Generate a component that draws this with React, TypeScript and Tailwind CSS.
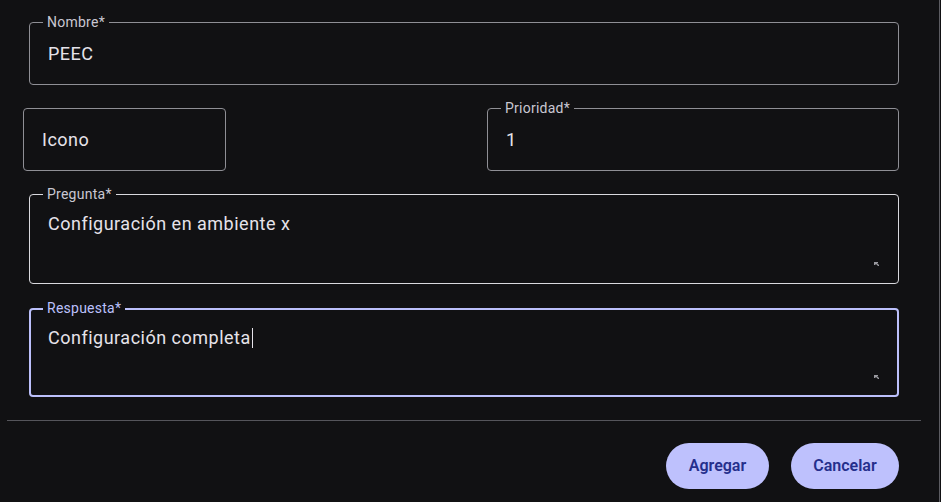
import React from 'react';

const font = { fontFamily: 'Roboto, "Noto Sans", sans-serif' };

// Campo con borde y etiqueta flotante sobre el borde
const Campo: React.FC<{
    label?: string;
    value: string;
    alto: string;
    activo?: boolean;
    multilinea?: boolean;
    cursor?: boolean;
    className?: string;
}> = ({ label, value, alto, activo, multilinea, cursor, className }) => {
    const borde = activo
        ? 'border-2 border-[#bcc0fb] px-[17px] pt-[16px]'
        : multilinea
        ? 'border border-[#d9d9de] px-[18px] pt-[17px]'
        : 'border border-[#8f8f95] px-[18px] items-center';

    return (
        <div className={`relative flex rounded-[4px] ${borde} ${alto} ${className ?? ''}`}>
            {label && (
                <span
                    className={`absolute ${activo ? 'left-[12px] -top-[10px]' : 'left-[13px] -top-[9px]'} px-[4px] bg-[#111113] text-[14px] leading-[16px] tracking-[0.25px] ${
                        activo ? 'text-[#bcc0fb]' : 'text-[#c9c7d2]'
                    }`}
                >
                    {label}
                </span>
            )}
            <span className="text-[18px] leading-[24px] text-[#e6e3ea] tracking-[0.5px] h-[24px]">
                {value}
                {cursor && <span className="inline-block w-px h-[20px] bg-[#e6e3ea] align-[-4px] ml-px" />}
            </span>
            {multilinea && (
                <svg
                    className={`absolute ${activo ? 'right-[17px] bottom-[14px]' : 'right-[18px] bottom-[15px]'}`}
                    width="6"
                    height="6"
                    viewBox="0 0 6 6"
                >
                    <path d="M0 0 L4 0 L4 1 L3 1 L5 3 L5 4 L4 4 L2 2 L1 3 L0 3 Z" fill="#9a9aa0" />
                </svg>
            )}
        </div>
    );
};

const App: React.FC = () => {
    return (
        <div className="w-[941px] h-[502px] bg-[#111113] flex overflow-hidden" style={font}>
            <div className="w-[939px] flex flex-col">
                <div className="flex flex-col pl-[29px] pr-[40px] pt-[22px]">
                    <Campo label="Nombre*" value="PEEC" alto="h-[63px]" />
                    <div className="flex justify-between mt-[23px]">
                        <Campo value="Icono" alto="h-[63px]" className="w-[203px] -ml-[6px]" />
                        <Campo label="Prioridad*" value="1" alto="h-[63px]" className="w-[412px]" />
                    </div>
                    <Campo
                        label="Pregunta*"
                        value="Configuración en ambiente x"
                        alto="h-[90px]"
                        multilinea
                        className="mt-[23px]"
                    />
                    <Campo
                        label="Respuesta*"
                        value="Configuración completa"
                        alto="h-[89px]"
                        multilinea
                        activo
                        cursor
                        className="mt-[24px]"
                    />
                </div>
                <div className="mt-[23px] ml-[7px] w-[914px] h-px bg-[#55555b]" />
                <div className="flex justify-end gap-[22px] pr-[40px] mt-[22px]">
                    <button className="h-[46px] w-[103px] rounded-full bg-[#bec1fd] text-[#252f8c] text-[16px] font-semibold">
                        Agregar
                    </button>
                    <button className="h-[46px] w-[108px] rounded-full bg-[#bec1fd] text-[#252f8c] text-[16px] font-semibold">
                        Cancelar
                    </button>
                </div>
            </div>
            <div className="w-px h-full bg-[#5c5c62]" />
            <div className="w-px h-full bg-[#111113]" />
        </div>
    );
};

export default App;
